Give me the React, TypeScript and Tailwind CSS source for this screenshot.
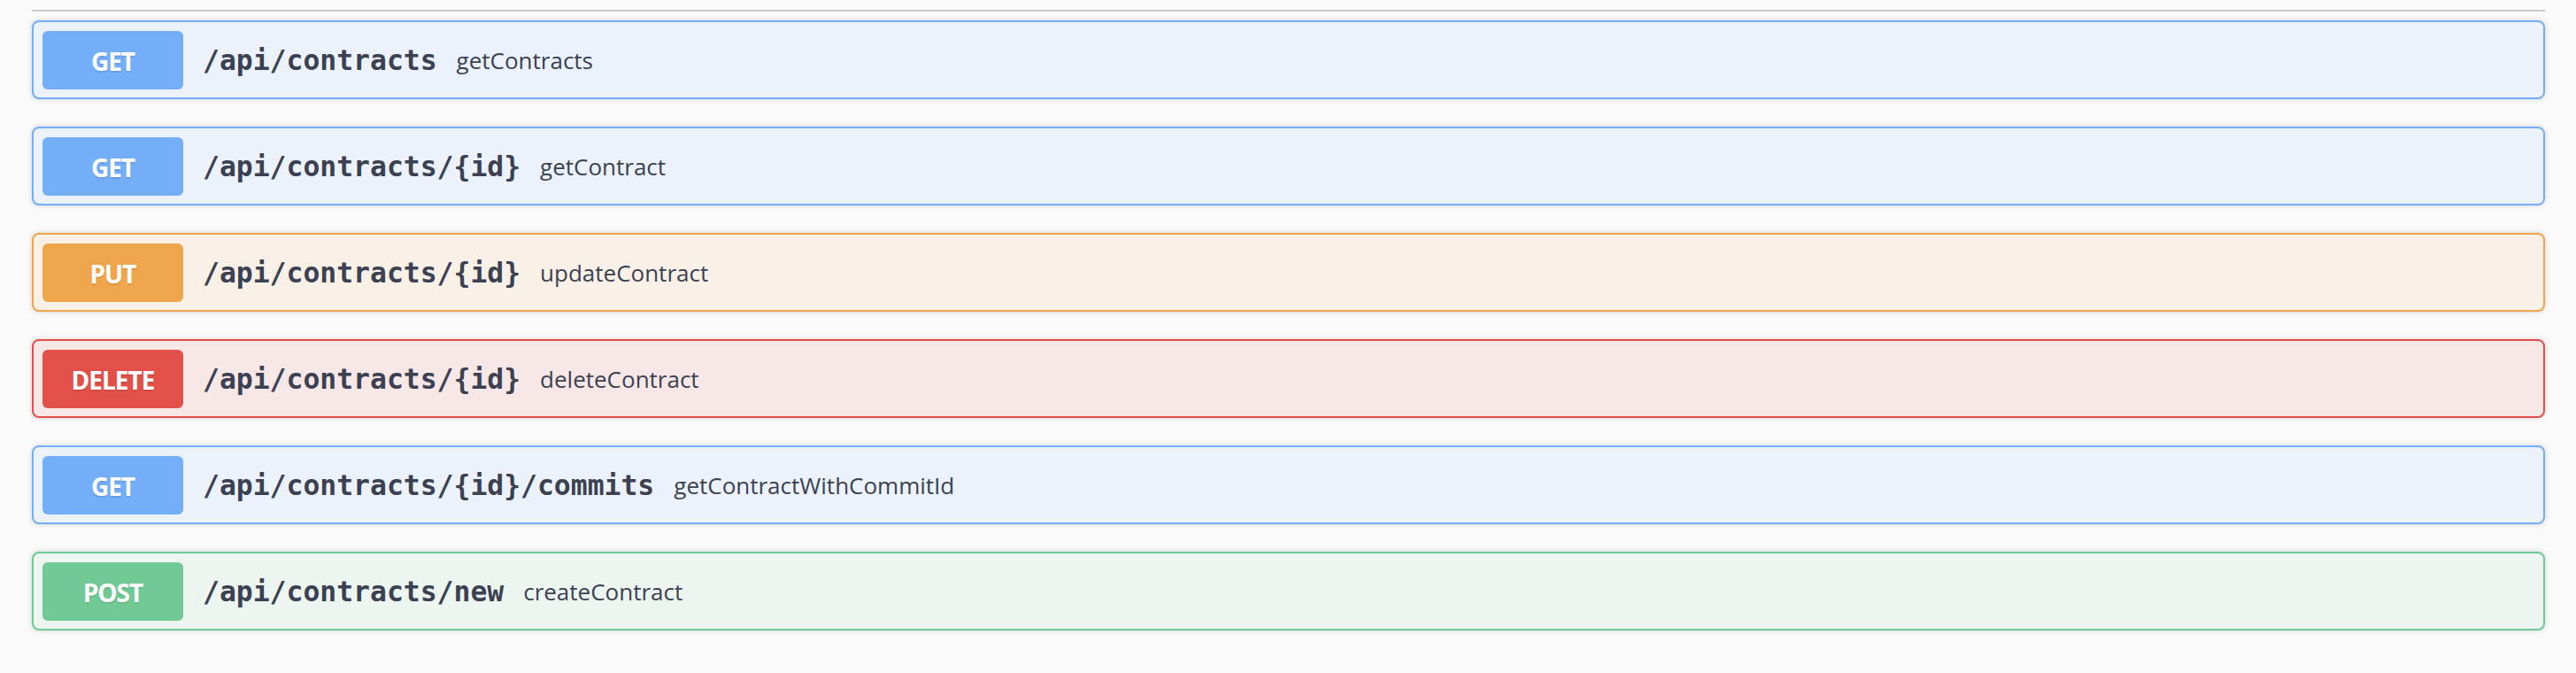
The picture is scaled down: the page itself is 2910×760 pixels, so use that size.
const ops = [
  { method: "GET", path: "/api/contracts", summary: "getContracts" },
  { method: "GET", path: "/api/contracts/{id}", summary: "getContract" },
  { method: "PUT", path: "/api/contracts/{id}", summary: "updateContract" },
  { method: "DELETE", path: "/api/contracts/{id}", summary: "deleteContract" },
  { method: "GET", path: "/api/contracts/{id}/commits", summary: "getContractWithCommitId" },
  { method: "POST", path: "/api/contracts/new", summary: "createContract" },
];

const tones: Record<string, { box: string; badge: string }> = {
  GET: { box: "border-[#74aef8] bg-[#ebf2fb]", badge: "bg-[#74aef8]" },
  PUT: { box: "border-[#eea54b] bg-[#f9f1e8]", badge: "bg-[#eea54b]" },
  DELETE: { box: "border-[#e3504a] bg-[#f8e7e7]", badge: "bg-[#e3504a]" },
  POST: { box: "border-[#71c996] bg-[#ecf5f0]", badge: "bg-[#71c996]" },
};

function Operation({ method, path, summary }: { method: string; path: string; summary: string }) {
  const tone = tones[method];
  return (
    <div
      className={`flex h-[89px] items-center rounded-[8px] border-2 px-[10px] shadow-[0_0_6px_rgba(0,0,0,0.16)] ${tone.box}`}
    >
      <div
        className={`flex h-[66px] w-[159px] shrink-0 items-center justify-center rounded-[6px] ${tone.badge}`}
      >
        <span className="pt-[3px] font-['Open_Sans',sans-serif] text-[28px] font-bold leading-none tracking-[-1px] text-white [text-shadow:0_2px_0_rgba(0,0,0,0.1)]">
          {method}
        </span>
      </div>
      <span className="ml-[22px] pt-[2px] font-['DejaVu_Sans_Mono',monospace] text-[31.4px] font-bold text-[#3b4151]">
        {path}
      </span>
      <span className="ml-[22px] pt-[2px] font-['Open_Sans',sans-serif] text-[26px] text-[#3b4151]">
        {summary}
      </span>
    </div>
  );
}

export default function App() {
  return (
    <div className="min-h-screen bg-[#fafafa] pl-[36px] pr-[35px] pt-[11px]">
      <div className="h-[2px] bg-[#c9c9ce]" />
      <div className="mt-[10px] flex flex-col gap-[31px]">
        {ops.map((op, i) => (
          <Operation key={i} {...op} />
        ))}
      </div>
    </div>
  );
}
